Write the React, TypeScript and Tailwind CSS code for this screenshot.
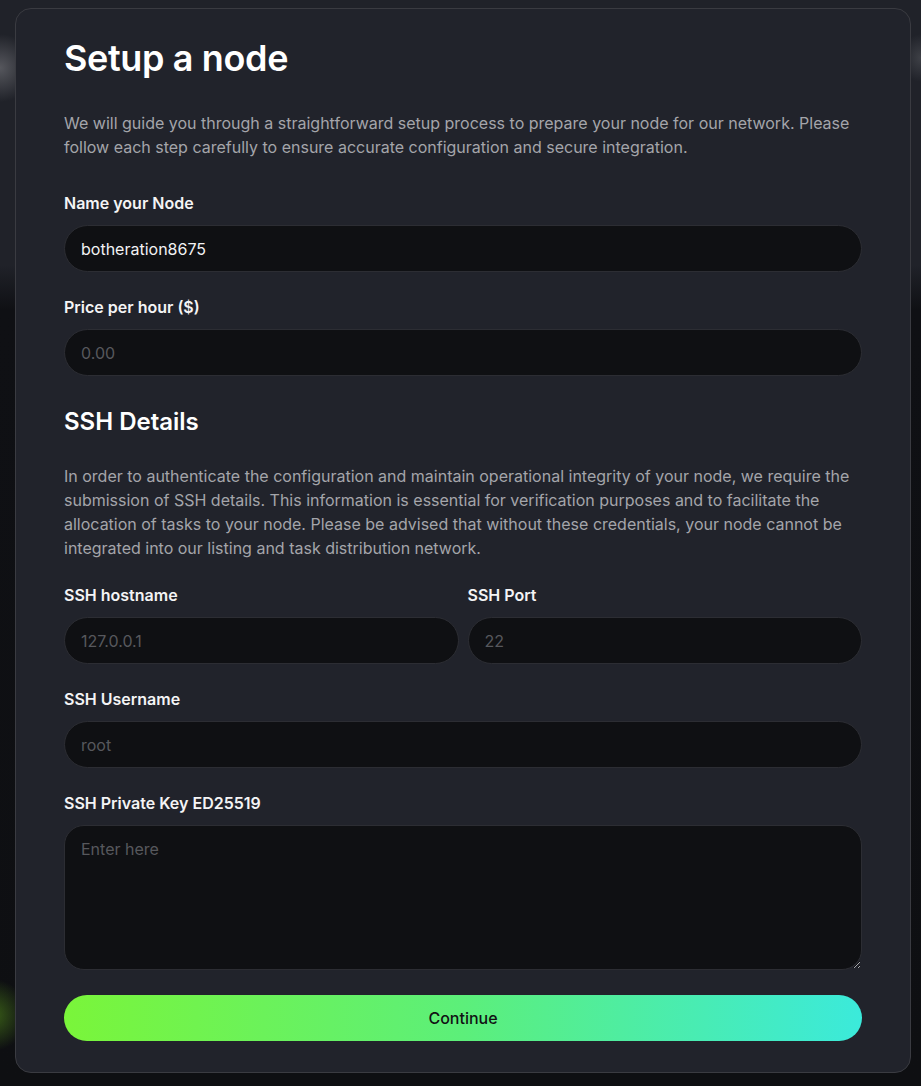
import React from "react";

interface FieldProps {
    label: string;
    placeholder?: string;
    value?: string;
}

function Field(props: FieldProps) {
    return (
        <label className="flex flex-col gap-[10px]">
            <span className="text-base leading-6 font-semibold text-[#f4f4f5]">{props.label}</span>
            <input
                defaultValue={props.value}
                placeholder={props.placeholder}
                className="h-[47px] w-full rounded-full border border-[#2c2d33] bg-[#0f1013] px-4 text-base text-[#f2f2f3] outline-none placeholder:text-[#57585d]"
            />
        </label>
    );
}

export default function App() {
    return (
        <div className="min-h-screen pl-[15px] pt-2 font-['Inter',sans-serif] bg-[radial-gradient(ellipse_34px_34px_at_0px_68px,rgba(95,96,102,0.85),transparent),radial-gradient(ellipse_20px_24px_at_921px_58px,rgba(70,72,78,0.8),transparent),radial-gradient(circle_36px_at_-8px_1015px,rgba(110,190,30,0.45),transparent),linear-gradient(to_bottom,#202229_0px,#202229_265px,#0f1014_310px,#0e0f12_100%)]">
            <div className="w-[896px] rounded-2xl border border-[#3a3b41] bg-[#21232b] px-12 pt-[29px] pb-[31px]">
                <h1 className="text-4xl leading-10 font-semibold tracking-[-0.01em] text-white">Setup a node</h1>
                <p className="mt-[33px] text-base leading-6 text-[#a4a5aa]">
                    We will guide you through a straightforward setup process to prepare your node for our network. Please follow each step carefully to ensure accurate configuration and secure integration.
                </p>
                <div className="mt-8 flex flex-col gap-[23px]">
                    <Field label="Name your Node" value="botheration8675" />
                    <Field label="Price per hour ($)" placeholder="0.00" />
                </div>
                <h2 className="mt-[30px] text-2xl leading-8 font-semibold text-white">SSH Details</h2>
                <p className="mt-[26px] text-base leading-6 text-[#a4a5aa]">
                    In order to authenticate the configuration and maintain operational integrity of your node, we require the submission of SSH details. This information is essential for verification purposes and to facilitate the allocation of tasks to your node. Please be advised that without these credentials, your node cannot be integrated into our listing and task distribution network.
                </p>
                <div className="mt-[23px] flex flex-col gap-[23px]">
                    <div className="grid grid-cols-2 gap-[9px]">
                        <Field label="SSH hostname" placeholder="127.0.0.1" />
                        <Field label="SSH Port" placeholder="22" />
                    </div>
                    <Field label="SSH Username" placeholder="root" />
                    <label className="flex flex-col gap-[10px]">
                        <span className="text-base leading-6 font-semibold text-[#f4f4f5]">SSH Private Key ED25519</span>
                        <textarea
                            placeholder="Enter here"
                            className="h-[145px] w-full rounded-[20px] border border-[#2c2d33] bg-[#0f1013] px-4 py-[11px] text-base leading-6 text-[#f2f2f3] outline-none placeholder:text-[#57585d] [color-scheme:dark]"
                        />
                    </label>
                </div>
                <button className="mt-[25px] h-[46px] w-full rounded-full bg-[linear-gradient(to_right,#7af53a,#5cef7a_50%,#3beadb)] text-base font-medium text-[#111214]">
                    Continue
                </button>
            </div>
        </div>
    );
}
